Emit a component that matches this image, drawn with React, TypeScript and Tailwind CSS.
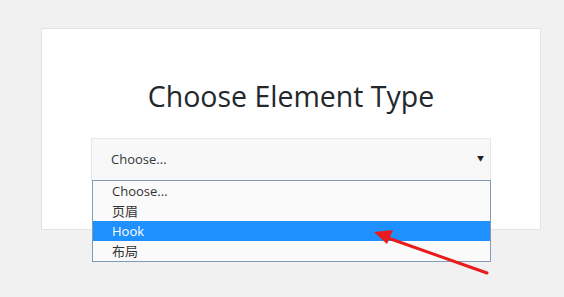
export default function App() {
  const options = ['Choose...', '页眉', 'Hook', '布局']
  return (
    <div className="relative w-[564px] h-[297px] overflow-hidden bg-[#f1f1f1] pt-[28px] pl-[41px] font-['Open_Sans','Noto_Sans_CJK_SC',sans-serif]">
      <div className="w-[500px] h-[202px] bg-white border border-[#e3e3e3] px-[49px] pt-[47px]">
        <h1 className="text-center text-[28.5px] leading-[40px] text-[#23282d]">Choose Element Type</h1>
        <div className="relative mt-[22px]">
          <div className="h-[43px] border border-[#e6e6e6] bg-[#f8f8f8] flex items-center justify-between pl-[19px] pr-[6px] text-[13px] text-[#32373c]">
            <span>Choose...</span>
            <span className="text-[7px] text-[#222]">▼</span>
          </div>
          <div className="absolute top-[42px] left-[1px] right-0 border border-[#7f9db9] bg-[#fafafa] text-[13px] text-[#333]">
            {options.map((o) => (
              <div
                key={o}
                className={`h-[20px] leading-[20px] pl-[19px] ${o === 'Hook' ? 'bg-[#1e90ff] text-white' : ''}`}
              >
                {o}
              </div>
            ))}
          </div>
        </div>
      </div>
      <svg className="absolute left-0 top-0" width="564" height="297" viewBox="0 0 564 297">
        <line x1="487" y1="273" x2="388" y2="238" stroke="#e81c1c" strokeWidth="3" strokeLinecap="round" />
        <polygon points="374,232 393,230 387,244" fill="#e81c1c" />
      </svg>
    </div>
  )
}
